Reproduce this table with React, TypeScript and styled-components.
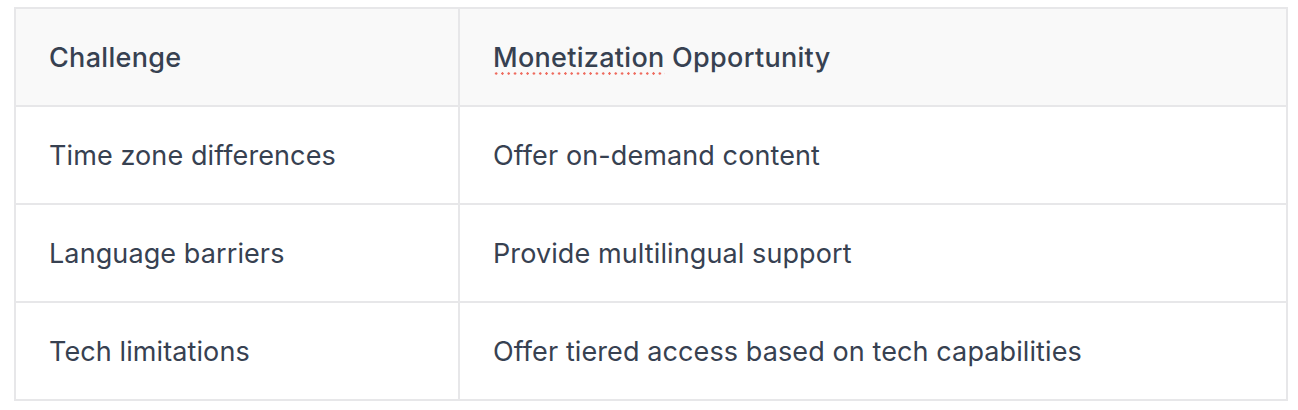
import React from "react";
import styled, { createGlobalStyle } from "styled-components";

const Global = createGlobalStyle`
  html, body { margin: 0; padding: 0; background: #ffffff; }
  body { font-family: Inter, "Noto Sans", sans-serif; -webkit-font-smoothing: antialiased; }
`;

const Page = styled.div`
  padding: 7px 10px 0 14px;
`;

const Table = styled.table`
  width: 1274px;
  border-collapse: collapse;
  table-layout: fixed;
  border: 2px solid #e7e7e9;
`;

const HeadRow = styled.tr`
  background: #f9f9f9;
`;

const Cell = styled.td<{ $head?: boolean }>`
  height: 98px;
  box-sizing: border-box;
  padding: 2px 33px 0;
  border: 2px solid #e7e7e9;
  color: #374151;
  font-size: 27px;
  letter-spacing: ${(p) => (p.$head ? "0.3px" : "0.1px")};
  font-weight: ${(p) => (p.$head ? 500 : 400)};
  line-height: 36px;
  text-align: left;
  vertical-align: middle;
`;

const Misspelled = styled.span`
  padding-bottom: 1px;
  background-image: radial-gradient(circle, #ef6b5e 1.1px, transparent 1.4px);
  background-size: 6.3px 3px;
  background-repeat: repeat-x;
  background-position: 0 100%;
`;

const rows: [string, string][] = [
  ["Time zone differences", "Offer on-demand content"],
  ["Language barriers", "Provide multilingual support"],
  ["Tech limitations", "Offer tiered access based on tech capabilities"],
];

export default function App() {
  return (
    <Page>
      <Global />
      <Table>
        <colgroup>
          <col style={{ width: 444 }} />
          <col />
        </colgroup>
        <thead>
          <HeadRow>
            <Cell as="th" $head>Challenge</Cell>
            <Cell as="th" $head>
              <Misspelled>Monetization</Misspelled> Opportunity
            </Cell>
          </HeadRow>
        </thead>
        <tbody>
          {rows.map(([a, b]) => (
            <tr key={a}>
              <Cell>{a}</Cell>
              <Cell>{b}</Cell>
            </tr>
          ))}
        </tbody>
      </Table>
    </Page>
  );
}
